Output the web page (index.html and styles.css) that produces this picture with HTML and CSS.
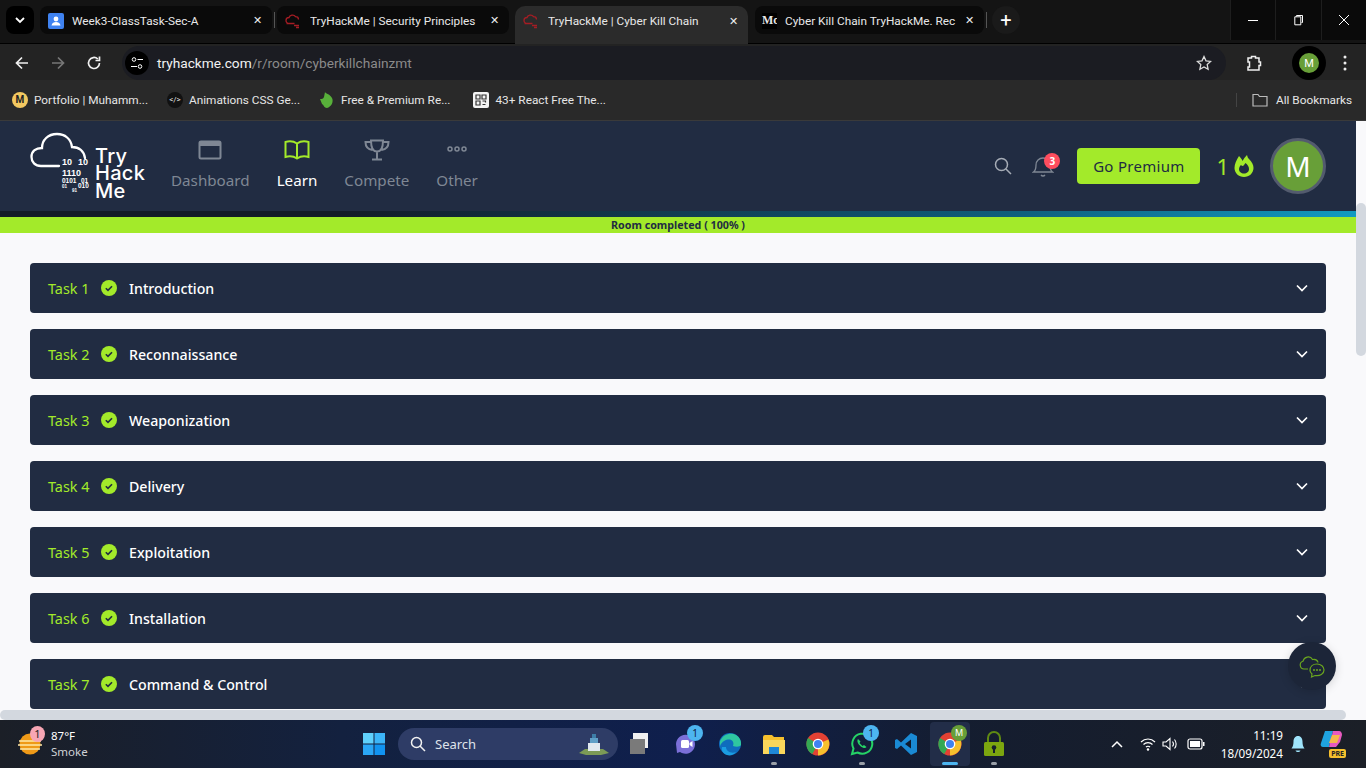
FILE: index.html
```html
<!DOCTYPE html>
<html lang="en">
<head>
  <meta charset="UTF-8" />
  <title>TryHackMe | Cyber Kill Chain</title>
  <link rel="stylesheet" href="styles.css">
</head>
<body>
  <!-- browser chrome -->
  <div class="tabstrip">
    <div class="tab-search"><svg width="12" height="12" viewBox="0 0 12 12"><path d="M2 4l4 4 4-4" fill="none" stroke="#fff" stroke-width="1.8"/></svg></div>
    <div class="tab tab-one">
      <svg class="favicon" width="16" height="16" viewBox="0 0 16 16"><rect width="16" height="16" rx="2" fill="#3f82f0"/><circle cx="8" cy="6" r="2.4" fill="#fff"/><path d="M3.5 12.5c.6-2.6 2.4-3.4 4.5-3.4s3.900.8 4.500 3.400z" fill="#fff"/></svg>
      <span class="tab-title">Week3-ClassTask-Sec-A</span>
      <span class="tab-close">✕</span>
    </div>
    <div class="tab-sep"></div>
    <div class="tab tab-two">
      <svg class="favicon" width="18" height="16" viewBox="0 0 18 16"><path d="M4 10.500a3 3 0 0 1 0-6c.6-2.500 4.800-3.500 6.500-.8 2 0 3 1.300 3 2.800M1.500 10.500h8M9 12.500h5M11 14.500h3" fill="none" stroke="#a51d24" stroke-width="1.300"/></svg>
      <span class="tab-title">TryHackMe | Security Principles</span>
      <span class="tab-close">✕</span>
    </div>
    <div class="tab tab-active">
      <svg class="favicon" width="18" height="16" viewBox="0 0 18 16"><path d="M4 10.500a3 3 0 0 1 0-6c.6-2.500 4.800-3.500 6.500-.8 2 0 3 1.300 3 2.800M1.500 10.500h8M9 12.500h5M11 14.500h3" fill="none" stroke="#a51d24" stroke-width="1.300"/></svg>
      <span class="tab-title">TryHackMe | Cyber Kill Chain</span>
      <span class="tab-close">✕</span>
    </div>
    <div class="tab tab-four">
      <span class="medium-icon">Mc</span>
      <span class="tab-title">Cyber Kill Chain TryHackMe. Rec</span>
      <span class="tab-close">✕</span>
    </div>
    <div class="tab-sep"></div>
    <div class="tab-new">+</div>
    <div class="win-buttons">
      <div class="win-btn"><svg width="12" height="12" viewBox="0 0 12 12"><path d="M1 6.500h10" stroke="#fff"/></svg></div>
      <div class="win-btn"><svg width="12" height="12" viewBox="0 0 12 12"><path d="M3.500 2.500V1.500h6v7h-1M1.800 2.800h6v8h-6z" fill="none" stroke="#fff"/></svg></div>
      <div class="win-btn"><svg width="12" height="12" viewBox="0 0 12 12"><path d="M1 1l10 10M11 1L1 11" stroke="#fff"/></svg></div>
    </div>
  </div>

  <div class="toolbar">
    <svg class="tool-icon" width="16" height="16" viewBox="0 0 16 16"><path d="M14 8H2.500M8 2.500L2.500 8 8 13.500" fill="none" stroke="#f0f0f0" stroke-width="1.700"/></svg>
    <svg class="tool-icon" width="16" height="16" viewBox="0 0 16 16"><path d="M2 8h11.500M8 2.500L13.500 8 8 13.500" fill="none" stroke="#777" stroke-width="1.700"/></svg>
    <svg class="tool-icon" width="16" height="16" viewBox="0 0 16 16"><path d="M13.500 8a5.500 5.500 0 1 1-1.700-4M13.500 1.500V5.500H9.500" fill="none" stroke="#f0f0f0" stroke-width="1.700"/></svg>
    <div class="omnibox">
      <span class="site-info"><svg width="14" height="14" viewBox="0 0 14 14"><circle cx="4" cy="3.500" r="1.800" fill="none" stroke="#fff"/><path d="M7.500 3.500H13M1 10.500h6" stroke="#fff"/><circle cx="10" cy="10.500" r="1.800" fill="none" stroke="#fff"/></svg></span>
      <span class="url"><b>tryhackme.com</b>/r/room/cyberkillchainzmt</span>
      <svg class="star" width="16" height="16" viewBox="0 0 16 16"><path d="M8 1.500l2 4.300 4.700.6-3.500 3.200.9 4.700L8 12l-4.100 2.300.9-4.700L1.300 6.400 6 5.800z" fill="none" stroke="#ddd" stroke-width="1.300"/></svg>
    </div>
    <svg class="ext-icon" width="16" height="18" viewBox="0 0 16 18"><path d="M2 4h3.500V2.500h4V4H13v4h1.500v3.500H13V16H2v-3h1.500V8H2z" fill="none" stroke="#f0f0f0" stroke-width="1.500"/></svg>
    <div class="profile-wrap"><span class="profile-small">M</span></div>
    <svg class="kebab" width="4" height="16" viewBox="0 0 4 16"><circle cx="2" cy="2" r="1.500" fill="#eee"/><circle cx="2" cy="8" r="1.500" fill="#eee"/><circle cx="2" cy="14" r="1.500" fill="#eee"/></svg>
  </div>

  <div class="bookmarks">
    <div class="bm"><span class="bm-m">M</span>Portfolio | Muhamm...</div>
    <div class="bm"><span class="bm-code">&lt;/&gt;</span>Animations CSS Ge...</div>
    <div class="bm"><svg width="16" height="18" viewBox="0 0 16 18"><path d="M6 1c1 2 5 2 7 6 2 4-1 9-5 10-3 0-3-3-5-4L1 8c2 0 3 0 4-2z" fill="#58b03a"/></svg>Free &amp; Premium Re...</div>
    <div class="bm bm-last"><svg width="16" height="16" viewBox="0 0 16 16"><rect width="16" height="16" rx="2" fill="#f4f4f4"/><path d="M3 3h4v4H3zM9 3h4v4H9zM3 9h4v4H3zM9.500 9h3v1.500M9.500 12.500h3" fill="none" stroke="#333" stroke-width="1.200"/></svg>43+ React Free The...</div>
    <div class="bm-all">
      <svg width="16" height="14" viewBox="0 0 16 14"><path d="M1 1.500h5l1.500 2h7.500v9.500H1z" fill="none" stroke="#bbb" stroke-width="1.200"/></svg>All Bookmarks
    </div>
  </div>

  <!-- page -->
  <div class="viewport">
    <div class="page">
      <header class="site-nav">
        <div class="logo">
          <svg class="logo-cloud" width="66" height="66" viewBox="0 0 66 66">
            <path d="M29 36H11C5 36 1.500 32 1.500 27 1.500 21 6 18 12 18 12 10 18 4 27 4 35 4 41 9 42 17 49 17 54 21 55 28" fill="none" stroke="#fff" stroke-width="2.300" stroke-linecap="round"/>
            <text x="32" y="35" class="bin">10</text><text x="48" y="35" class="bin">10</text>
            <text x="32" y="46" class="bin">1110</text>
            <text x="32" y="53" class="bin-s">0101</text><text x="51" y="53" class="bin-s">01</text>
            <text x="32" y="58" class="bin-xs">01</text><text x="48" y="58" class="bin-s">010</text>
            <text x="42" y="62" class="bin-xs">91</text>
          </svg>
          <div class="logo-text">Try<br>Hack<br>Me</div>
        </div>
        <nav class="nav-links">
          <a class="nav-item">
            <svg width="24" height="22" viewBox="0 0 24 22"><rect x="1.500" y="2.500" width="21" height="17" rx="1.500" fill="none" stroke="#7f8794" stroke-width="2"/><rect x="1.500" y="2.500" width="21" height="4.500" fill="#7f8794"/></svg>
            <span>Dashboard</span>
          </a>
          <a class="nav-item nav-on">
            <svg width="26" height="22" viewBox="0 0 26 22"><path d="M13 4.500C10 2.500 5 2 1.500 3v15c3.500-1 8.500-.5 11.500 1.500 3-2 8-2.500 11.500-1.500V3C21 2 16 2.500 13 4.500zM13 4.500v15" fill="none" stroke="#a3ea2a" stroke-width="2"/></svg>
            <span>Learn</span>
          </a>
          <a class="nav-item">
            <svg width="26" height="22" viewBox="0 0 26 22"><path d="M7 1.500h12c0 8-2 11-6 11s-6-3-6-11zM7 3H1.500c0 5 3 7.500 7 8M19 3h5.500c0 5-3 7.500-7 8M13 12.500v7M8 20.500h10" fill="none" stroke="#7f8794" stroke-width="2"/></svg>
            <span>Compete</span>
          </a>
          <a class="nav-item">
            <svg width="22" height="22" viewBox="0 0 22 22"><g fill="none" stroke="#7f8794" stroke-width="1.500"><circle cx="4" cy="10" r="2"/><circle cx="11" cy="10" r="2"/><circle cx="18" cy="10" r="2"/></g></svg>
            <span>Other</span>
          </a>
        </nav>
        <div class="nav-right">
          <svg class="search-ico" width="18" height="18" viewBox="0 0 18 18"><circle cx="7.500" cy="7.500" r="6" fill="none" stroke="#a6acb6" stroke-width="1.500"/><path d="M12 12l5 5" stroke="#a6acb6" stroke-width="1.500"/></svg>
          <div class="bell">
            <svg width="22" height="24" viewBox="0 0 22 24"><path d="M1.500 18c2-1.500 2.500-3 2.500-7 0-4 3-7 7-7s7 3 7 7c0 4 .5 5.500 2.500 7zM9 21c1 1.300 3 1.300 4 0" fill="none" stroke="#7f8794" stroke-width="1.300"/></svg>
            <span class="bell-count">3</span>
          </div>
          <button class="premium">Go Premium</button>
          <div class="streak">1
            <svg width="22" height="24" viewBox="0 0 22 24"><path d="M6 2c2 2 3 3.500 3.500 5C10.500 5 12 3 14 1c.5 2 1 3 2 4 3 3 4.500 6 4.500 9 0 5-4.200 9-9.500 9S1.500 19 1.500 14c0-4 2-8 4.500-12z" fill="#a3ea2a"/><path d="M8 11c1 1 2 1.500 3 0l1.500-2c2 1.500 3.500 3.500 3.500 6 0 2.800-2.200 4.500-5 4.500S6 17.800 6 15c0-1.500 1-3 2-4z" fill="#212c42"/></svg>
          </div>
          <div class="avatar">M</div>
        </div>
      </header>
      <div class="nav-strip"></div>
      <div class="room-progress">Room completed ( 100% )</div>

      <main class="tasks" id="tasks"></main>

      <div class="chat-fab">
        <svg width="26" height="24" viewBox="0 0 26 24"><path d="M9 15H5a4 4 0 0 1-1-7.800C5 3 11 1 13.500 5.500c2.500-.5 5 .5 5.500 3" fill="none" stroke="#6aa51f" stroke-width="1.200"/><path d="M11 16.500c0-4 3-6.500 7-6.500s7 2.500 7 6c0 4-4 6.300-9 5.500L12.500 23l.5-3c-1-1-2-2-2-3.500z" fill="#1c2538" stroke="#6aa51f" stroke-width="1.200"/><g fill="#6aa51f"><circle cx="15" cy="16" r="1"/><circle cx="18" cy="16" r="1"/><circle cx="21" cy="16" r="1"/></g></svg>
      </div>
    </div>
    <div class="vscroll"><div class="vthumb"></div></div>
    <div class="hscroll"></div>
  </div>

  <!-- windows taskbar -->
  <div class="taskbar">
    <div class="weather">
      <div class="weather-ico">
        <svg width="24" height="24" viewBox="0 0 24 24"><circle cx="12" cy="12" r="10.500" fill="#ef9a18"/><path d="M1 9h22M0 13h24M2 17h20" stroke="#ffe9a6" stroke-width="1.500"/></svg>
        <span class="weather-badge">1</span>
      </div>
      <div class="weather-text"><div>87°F</div><div class="weather-sub">Smoke</div></div>
    </div>
    <div class="task-center">
      <svg class="task-ico" width="24" height="24" viewBox="0 0 24 24"><rect x="1" y="1" width="10.500" height="10.500" fill="#5fd0fb"/><rect x="12.500" y="1" width="10.500" height="10.500" fill="#3cb5f8"/><rect x="1" y="12.500" width="10.500" height="10.500" fill="#2aa6f5"/><rect x="12.500" y="12.500" width="10.500" height="10.500" fill="#1193f0"/></svg>
      <div class="win-search">
        <svg width="16" height="16" viewBox="0 0 16 16"><circle cx="6.500" cy="6.500" r="5" fill="none" stroke="#f2f2f2" stroke-width="1.500"/><path d="M10 10l5 5" stroke="#f2f2f2" stroke-width="1.500"/></svg>
        <span>Search</span>
        <svg class="castle" width="32" height="24" viewBox="0 0 32 24"><path d="M1 21l6-4h18l6 4-8 2H8z" fill="#7c9a56"/><path d="M10 19V11h12v8z" fill="#dfe8ef"/><path d="M12 11V6h8v5z" fill="#5f9fc7"/><path d="M14 6V2h4v4z" fill="#3d7ea8"/></svg>
      </div>
      <svg class="task-ico" width="24" height="24" viewBox="0 0 24 24"><rect x="3" y="1" width="15" height="15" fill="#f0f0f0"/><rect x="0" y="7" width="15" height="15" fill="#7a7a7a"/></svg>
      <div class="task-slot">
        <svg width="24" height="26" viewBox="0 0 24 26"><path d="M2 13a9.500 9.500 0 1 1 4 8l-3 1z" fill="#7b6fd8"/><rect x="7" y="9" width="8" height="8" rx="1.500" fill="#fff"/><path d="M15.500 12l3-2v6l-3-2z" fill="#fff"/></svg>
        <span class="task-badge">1</span>
      </div>
      <div class="task-slot">
        <svg width="24" height="24" viewBox="0 0 24 24"><circle cx="12" cy="12" r="11" fill="#0f6cbd"/><path d="M2 9C5 2 13 0 18 3c4 2.500 5.500 6 5 10-1 2-5 2-8 1 1.500-4-1-6.500-4-6.500S4 9 2 14z" fill="#2fc6a0"/><path d="M8 15c0 4 5 7 10 5-2 3-6 4-9 3-4-1-6-5-5-8z" fill="#1b9de2"/></svg>
      </div>
      <div class="task-slot">
        <svg width="24" height="24" viewBox="0 0 24 24"><path d="M1 5a2 2 0 0 1 2-2h7l2 2h10v16H1z" fill="#f6c02d"/><rect x="1" y="8" width="22" height="14" fill="#fbd75b"/><rect x="7" y="15" width="10" height="7" fill="#1f88d8"/></svg>
        <span class="task-dot"></span>
      </div>
      <div class="task-slot"><svg width="24" height="24" viewBox="0 0 24 24"><circle cx="12" cy="12" r="11.500" fill="#e34133"/><path d="M12 12l10.400-4.500A11.500 11.500 0 0 1 12 23.500z" fill="#f6c02d"/><path d="M12 12L6.300 22A11.500 11.500 0 0 1 2 6z" fill="#34a853"/><circle cx="12" cy="12" r="5.300" fill="#fff"/><circle cx="12" cy="12" r="4" fill="#3f82f0"/></svg></div>
      <div class="task-slot">
        <svg width="24" height="24" viewBox="0 0 24 24"><path d="M2 22l1.500-5.500A10 10 0 1 1 7.500 20.500z" fill="none" stroke="#25d366" stroke-width="2"/><path d="M8 7c-1.500 2 0 5 2.500 7.200 2.500 2 5 2.500 6 .8l-2.500-2-1.500 1-3-3 1-1.500z" fill="#25d366"/></svg>
        <span class="task-badge">1</span>
        <span class="task-dot"></span>
      </div>
      <div class="task-slot"><svg width="24" height="24" viewBox="0 0 24 24"><path d="M17 1l6 3v16l-6 3L7 13.500 3 17l-2-1V8l2-1 4 3.500z" fill="#1a8ad4"/><path d="M17 7.500L11 12l6 4.500z" fill="#101b2e"/></svg></div>
      <div class="task-slot task-running">
        <svg width="24" height="24" viewBox="0 0 24 24"><circle cx="12" cy="12" r="11.500" fill="#e34133"/><path d="M12 12l10.400-4.500A11.500 11.500 0 0 1 12 23.500z" fill="#f6c02d"/><path d="M12 12L6.300 22A11.500 11.500 0 0 1 2 6z" fill="#34a853"/><circle cx="12" cy="12" r="5.300" fill="#fff"/><circle cx="12" cy="12" r="4" fill="#3f82f0"/></svg>
        <span class="task-profile">M</span>
        <span class="task-bar"></span>
      </div>
      <div class="task-slot">
        <svg width="24" height="26" viewBox="0 0 24 26"><path d="M6 11V7a6 6 0 0 1 12 0v4" fill="none" stroke="#5f8a12" stroke-width="2"/><rect x="2" y="11" width="20" height="14" rx="1.500" fill="#7ca60f"/><circle cx="12" cy="16.500" r="2.300" fill="#16202c"/><rect x="11" y="17" width="2" height="5" fill="#16202c"/></svg>
        <span class="task-dot"></span>
      </div>
    </div>
    <div class="tray">
      <svg width="12" height="8" viewBox="0 0 12 8"><path d="M1 7l5-5 5 5" fill="none" stroke="#fff" stroke-width="1.500"/></svg>
      <svg class="tray-wifi" width="16" height="14" viewBox="0 0 16 14"><g fill="none" stroke="#fff" stroke-width="1.200"><path d="M1 5c4-4 10-4 14 0M3.500 7.500c2.500-2.500 6.500-2.500 9 0M6 10c1-1 3-1 4 0"/></g><circle cx="8" cy="12.500" r="1.200" fill="#fff"/></svg>
      <svg class="tray-vol" width="16" height="14" viewBox="0 0 16 14"><path d="M1 5h3l4-3.500v11L4 9H1zM10.500 4.500c1.200 1.500 1.200 3.500 0 5M12.500 2.500c2.200 2.500 2.200 6.500 0 9" fill="none" stroke="#fff" stroke-width="1.100"/></svg>
      <svg width="18" height="12" viewBox="0 0 18 12"><rect x="1" y="1" width="14" height="10" rx="2" fill="none" stroke="#fff" stroke-width="1.200"/><rect x="3" y="3" width="10" height="6" fill="#fff"/><rect x="16" y="4" width="1.500" height="4" fill="#fff"/></svg>
      <div class="clock"><div>11:19</div><div>18/09/2024</div></div>
      <svg class="tray-bell" width="16" height="18" viewBox="0 0 16 18"><path d="M8 1c3 0 4.500 2.500 4.500 5.500 0 3 .5 5 2 7H1.500c1.500-2 2-4 2-7C3.500 3.500 5 1 8 1zM5.500 15.500c1 2 4 2 5 0z" fill="#9fe4fb"/></svg>
      <div class="copilot">
        <svg width="24" height="18" viewBox="0 0 24 18"><path d="M5 1h8L9 17H3c-2 0-3-2-2-4z" fill="#1fa3e0"/><path d="M13 1h6c2 0 3 2 3 4l-2 7-4 5H9z" fill="#e85ac0"/><path d="M12 5h8l-3 8H9z" fill="#f6b84a"/></svg>
        <span class="pre">PRE</span>
      </div>
    </div>
  </div>

  <script>
    const tasks = ['Introduction', 'Reconnaissance', 'Weaponization', 'Delivery', 'Exploitation', 'Installation', 'Command & Control'];
    const list = document.getElementById('tasks');
    tasks.forEach((name, i) => {
      const row = document.createElement('div');
      row.className = 'task-row';
      row.innerHTML = `
        <span class="task-num">Task ${i + 1}</span>
        <svg class="task-check" width="16" height="16" viewBox="0 0 16 16"><circle cx="8" cy="8" r="8" fill="#a3ea2a"/><path d="M4.800 8.200l2.200 2.200 4-4.200" fill="none" stroke="#212c42" stroke-width="1.600"/></svg>
        <span class="task-name"></span>
        <svg class="task-chevron" width="12" height="8" viewBox="0 0 12 8"><path d="M1 1.500l5 5 5-5" fill="none" stroke="#fff" stroke-width="1.700"/></svg>`;
      row.querySelector('.task-name').textContent = name;
      list.appendChild(row);
    });
  </script>
</body>
</html>
```
FILE: styles.css
```css
* {
  box-sizing: border-box;
}
html, body {
  height: 100%;
}
body {
  margin: 0;
  display: flex;
  flex-direction: column;
  overflow: hidden;
  font-family: 'Noto Sans', sans-serif;
  background: #101010;
  color: #fff;
}

/* tab strip */
.tabstrip {
  height: 44px;
  flex: none;
  display: flex;
  align-items: flex-start;
  padding: 6px 0 0 6px;
  background: #141414;
  border-bottom: 1px solid #000;
  font-family: Roboto, sans-serif;
}
.tab-search {
  width: 28px;
  height: 28px;
  border-radius: 8px;
  background: #000;
  display: flex;
  align-items: center;
  justify-content: center;
  margin-right: 6px;
}
.tab {
  width: 232px;
  height: 28px;
  flex: none;
  display: flex;
  align-items: center;
  gap: 7px;
  border-radius: 8px;
  background: #0a0a0a;
  padding: 1px 10px 0 8px;
  font-size: 11.800px;
  color: #e8e8e8;
  white-space: nowrap;
}
.tab-one {
  gap: 8px;
}
.tab-active {
  width: 233px;
  height: 38px;
  margin: 0 7px 0 6px;
  padding-top: 0;
  background: #2b2b2b;
  border-radius: 10px 10px 0 0;
  padding-bottom: 8px;
}
.tab-four {
  width: 229px;
  gap: 8px;
  padding-left: 7px;
}
.tab-title {
  flex: 1;
  overflow: hidden;
}
.tab-close {
  font-size: 11px;
  color: #eee;
}
.tab-sep {
  width: 1px;
  height: 16px;
  background: #555;
  margin: 6px 2px 0;
  flex: none;
}
.favicon {
  flex: none;
}
.medium-icon {
  width: 15px;
  height: 16px;
  flex: none;
  overflow: hidden;
  background: #000;
  font: bold 12px 'Liberation Serif', serif;
}
.tab-new {
  width: 28px;
  height: 28px;
  border-radius: 50%;
  background: #1a1a1a;
  display: flex;
  align-items: center;
  justify-content: center;
  font-size: 20px;
  margin-left: 3px;
}
.win-buttons {
  margin-left: auto;
  margin-top: -6px;
  display: flex;
  height: 40px;
  background: #0a0a0a;
}
.win-btn {
  width: 45.300px;
  display: flex;
  align-items: center;
  justify-content: center;
  border-left: 1px solid #1e1e1e;
}

/* toolbar */
.toolbar {
  height: 36px;
  flex: none;
  display: flex;
  align-items: center;
  padding: 2px 0 0 14px;
  background: #232323;
  font-family: Roboto, sans-serif;
}
.tool-icon {
  margin-right: 20px;
}
.omnibox {
  width: 1104px;
  height: 34px;
  border-radius: 17px;
  background: #1b1c22;
  display: flex;
  align-items: center;
  padding: 0 14px 0 3px;
}
.site-info {
  width: 24px;
  height: 24px;
  border-radius: 50%;
  background: #000;
  display: flex;
  align-items: center;
  justify-content: center;
  margin-right: 8px;
}
.url {
  font-size: 13.700px;
  color: #8b8b8b;
}
.url b {
  font-weight: 400;
  color: #f2f2f2;
}
.star {
  margin-left: auto;
}
.ext-icon {
  margin-left: 20px;
}
.profile-wrap {
  width: 34px;
  height: 34px;
  margin-left: 30px;
  border-radius: 50%;
  background: #000;
  display: flex;
  align-items: center;
  justify-content: center;
}
.profile-small {
  width: 20px;
  height: 20px;
  border-radius: 50%;
  background: #689f38;
  font-size: 11px;
  display: flex;
  align-items: center;
  justify-content: center;
}
.kebab {
  margin-left: 17px;
}

/* bookmarks */
.bookmarks {
  height: 41px;
  flex: none;
  display: flex;
  align-items: center;
  gap: 19px;
  padding: 0 14px 1px 12px;
  background: #292929;
  border-bottom: 1px solid #3a3a3a;
  font-family: Roboto, sans-serif;
  font-size: 11.800px;
  color: #e6e6e6;
}
.bm {
  display: flex;
  align-items: center;
  gap: 6px;
  white-space: nowrap;
}
.bm-last {
  margin-left: 4px;
}
.bm-m {
  width: 16px;
  height: 16px;
  border-radius: 50%;
  background: #f3c860;
  color: #222;
  font-size: 10px;
  font-weight: 700;
  text-align: center;
  line-height: 16px;
}
.bm-code {
  width: 16px;
  height: 16px;
  border-radius: 50%;
  background: #111;
  font-size: 8px;
  text-align: center;
  line-height: 16px;
}
.bm-all {
  margin-left: auto;
  display: flex;
  align-items: center;
  gap: 8px;
  padding-left: 15px;
  border-left: 1px solid #444;
}

/* page */
.viewport {
  position: relative;
  flex: none;
  height: 599px;
  overflow: hidden;
  background: #f9f9fb;
}
.page {
  width: 1356px;
}
.site-nav {
  height: 90px;
  display: flex;
  align-items: center;
  padding: 0 30px;
  background: #212c42;
}
.logo {
  display: flex;
  align-items: flex-end;
  width: 141px;
  height: 70px;
  align-self: flex-start;
  margin-top: 9px;
}
.logo-cloud {
  flex: none;
  margin: 0 -1px 4px 0;
}
.bin {
  font: 700 9px 'Liberation Sans', sans-serif;
  fill: #fff;
}
.bin-s {
  font: 700 6.500px 'Liberation Sans', sans-serif;
  fill: #fff;
}
.bin-xs {
  font: 700 4.500px 'Liberation Sans', sans-serif;
  fill: #fff;
}
.logo-text {
  font: 500 20px/17.500px 'Inter', sans-serif;
  letter-spacing: .3px;
  color: #fff;
}
.nav-links {
  display: flex;
  gap: 27px;
  margin-top: -3px;
}
.nav-item {
  display: flex;
  flex-direction: column;
  align-items: center;
  gap: 9px;
  font-size: 15.200px;
  color: #7f8794;
}
.nav-on {
  color: #fff;
}
.nav-right {
  margin-left: auto;
  display: flex;
  align-items: center;
}
.search-ico {
  margin-right: 20px;
}
.bell {
  position: relative;
  width: 22px;
  height: 24px;
  margin-right: 23px;
}
.bell-count {
  position: absolute;
  top: -1px;
  left: 12px;
  width: 16px;
  height: 16px;
  border-radius: 50%;
  background: #ff4d5e;
  color: #fff;
  font-size: 10px;
  font-weight: 700;
  text-align: center;
  line-height: 16px;
}
.premium {
  width: 123px;
  height: 36px;
  border: none;
  border-radius: 4px;
  background: #a3ea2a;
  color: #212c42;
  font: 15px 'Noto Sans', sans-serif;
  letter-spacing: .3px;
}
.streak {
  display: flex;
  align-items: center;
  gap: 4px;
  margin: 0 15px 0 16px;
  color: #a3ea2a;
  font-size: 22px;
}
.avatar {
  width: 56px;
  height: 56px;
  border-radius: 50%;
  background: #689f38;
  border: 3px solid #535b6e;
  font-size: 28px;
  display: flex;
  align-items: center;
  justify-content: center;
}
.nav-strip {
  height: 6px;
  background: linear-gradient(90deg, #131b27 0%, #131b27 25%, #0f5f7c 75%, #119bc0 100%);
}
.room-progress {
  height: 16px;
  background: #a3ea2a;
  color: #212c42;
  font-size: 10.700px;
  font-weight: 700;
  line-height: 16px;
  text-align: center;
}
.tasks {
  display: flex;
  flex-direction: column;
  gap: 16px;
  padding: 30px;
}
.task-row {
  height: 50px;
  flex: none;
  display: flex;
  align-items: center;
  padding: 0 18px;
  border-radius: 4px;
  background: #212c42;
}
.task-num {
  width: 53px;
  font-size: 14.400px;
  color: #a3ea2a;
}
.task-check {
  margin-right: 12px;
}
.task-name {
  font-size: 14.200px;
  font-weight: 500;
}
.task-chevron {
  margin-left: auto;
}
.chat-fab {
  position: absolute;
  left: 1288px;
  top: 521px;
  width: 48px;
  height: 48px;
  border-radius: 50%;
  background: #1c2538;
  box-shadow: 0 2px 10px rgba(0,0,0,.15);
  display: flex;
  align-items: center;
  justify-content: center;
}
.vscroll {
  position: absolute;
  top: 0;
  right: 0;
  bottom: 10px;
  width: 10px;
  background: #f9f9fb;
}
.vthumb {
  position: absolute;
  top: 82px;
  width: 10px;
  height: 153px;
  border-radius: 5px;
  background: #d3d8df;
}
.hscroll {
  position: absolute;
  left: 0;
  right: 20px;
  bottom: 0;
  height: 10px;
  border-radius: 5px;
  background: #d3d8df;
}

/* taskbar */
.taskbar {
  flex: 1;
  display: flex;
  align-items: center;
  padding: 0 20px 0 18px;
  background: linear-gradient(90deg, #1b1f27 0%, #13213f 25%, #0f1f4d 50%, #141d30 70%, #1b1f27 100%);
  font-size: 12px;
}
.weather {
  width: 344px;
  display: flex;
  align-items: center;
  gap: 9px;
  flex: none;
}
.weather-ico {
  position: relative;
  width: 24px;
  height: 24px;
}
.weather-badge {
  position: absolute;
  top: -6px;
  left: 12px;
  width: 15px;
  height: 16px;
  border-radius: 50%;
  background: #f7a6b4;
  color: #222;
  font-size: 11px;
  text-align: center;
  line-height: 16px;
}
.weather-text {
  font-size: 11.500px;
  line-height: 16px;
}
.weather-sub {
  color: #cfd2d6;
}
.task-center {
  display: flex;
  align-items: center;
  flex: none;
}
.win-search {
  width: 220px;
  height: 32px;
  margin: 0 12px;
  display: flex;
  align-items: center;
  gap: 9px;
  padding: 0 8px 0 12px;
  border-radius: 16px;
  background: #2e3c66;
  color: #dfe3ea;
  font-size: 13px;
}
.castle {
  margin-left: auto;
}
.task-slot {
  position: relative;
  width: 44px;
  height: 44px;
  display: flex;
  align-items: center;
  justify-content: center;
}
.task-center > .win-search + .task-ico {
  margin-right: 10px;
}
.task-running {
  width: 40px;
  margin: 0 2px;
  background: #222d48;
  border-radius: 4px;
}
.task-badge {
  position: absolute;
  top: 3px;
  right: 5px;
  width: 16px;
  height: 16px;
  border-radius: 50%;
  background: #4db5f0;
  color: #102040;
  font-size: 10px;
  text-align: center;
  line-height: 16px;
}
.task-dot {
  position: absolute;
  bottom: 1px;
  left: 19px;
  width: 6px;
  height: 3px;
  border-radius: 2px;
  background: #9aa0a8;
}
.task-bar {
  position: absolute;
  bottom: 1px;
  left: 12px;
  width: 16px;
  height: 3px;
  border-radius: 2px;
  background: #4db5f0;
}
.task-profile {
  position: absolute;
  top: 3px;
  right: 3px;
  width: 16px;
  height: 16px;
  border-radius: 50%;
  background: #689f38;
  font-size: 9px;
  text-align: center;
  line-height: 16px;
}
.tray {
  margin-left: auto;
  display: flex;
  align-items: center;
  gap: 9px;
}
.tray-wifi {
  margin-left: 8px;
}
.tray-vol {
  margin-left: -3px;
}
.clock {
  margin-left: 7px;
  text-align: right;
  font-size: 11.700px;
  line-height: 18px;
}
.tray-bell {
  margin-left: -2px;
}
.copilot {
  position: relative;
  width: 26px;
  height: 28px;
  margin-left: 5px;
}
.pre {
  position: absolute;
  bottom: 0;
  right: 0;
  padding: 0 2px;
  border-radius: 2px;
  background: #f6c02d;
  color: #222;
  font-size: 7px;
  font-weight: 700;
  line-height: 9px;
}
```
